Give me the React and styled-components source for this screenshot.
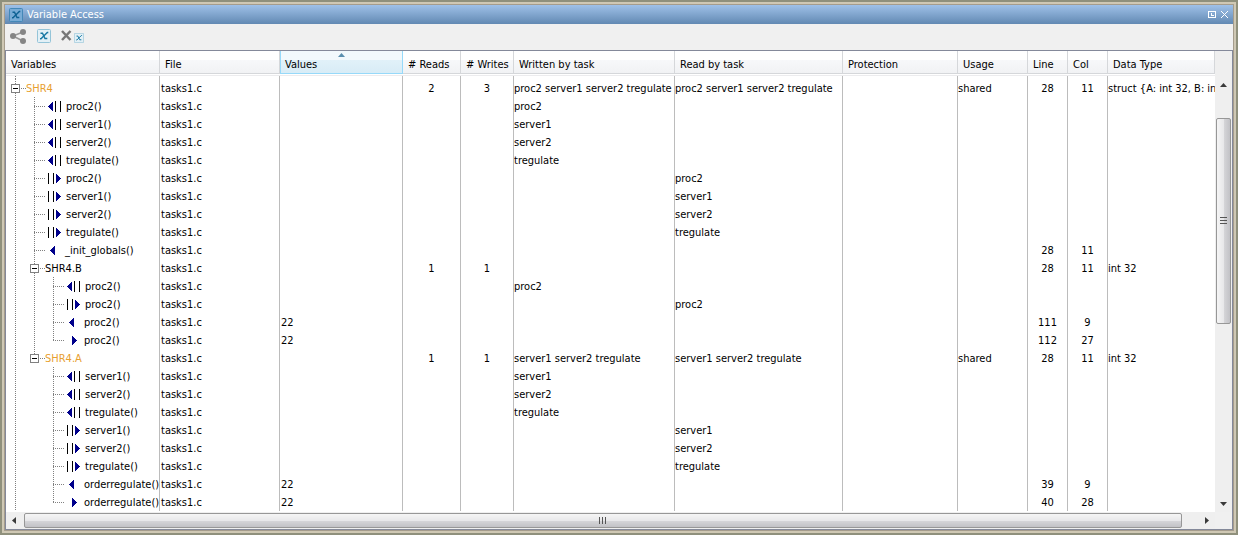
import React from "react";
import styled, { createGlobalStyle } from "styled-components";

const GlobalStyle = createGlobalStyle`
  * { box-sizing: border-box; }
  body {
    margin: 0;
    font-family: "DejaVu Sans Condensed", "DejaVu Sans", sans-serif;
    font-size: 11px;
    line-height: 16px;
    color: #000;
  }
  button { font: inherit; border: 0; padding: 0; background: none; color: inherit; }
`;

const Frame = styled.main`
  min-height: 100vh;
  display: flex;
  flex-direction: column;
  border: 2px solid #8f907c;
  padding: 2px;
  background: #cfc8b4;
`;

const Panel = styled.section`
  flex: 1;
  display: flex;
  flex-direction: column;
  border: 1px solid #a59c8c;
  background: #f0f0f0;
`;

const TitleBar = styled.header`
  display: flex;
  align-items: center;
  height: 19px;
  padding: 0 4px;
  gap: 4px;
  color: #fff;
  background: linear-gradient(#9fc1e8, #6289b3);
`;

const Title = styled.h1`
  flex: 1;
  margin: 0;
  font-size: 11px;
  font-weight: normal;
`;

const TitleButtons = styled.div`
  display: flex;
  gap: 3px;
`;

const IconButton = styled.button`
  display: flex;
  align-items: flex-end;
`;

const Toolbar = styled.div`
  display: flex;
  align-items: center;
  height: 26px;
  padding: 0 5px 2px;
  gap: 10px;
`;

const Grid = styled.div`
  flex: 1;
  display: grid;
  grid-template-columns: minmax(0, 1fr) 17px;
  grid-template-rows: 1fr 17px;
  border: 1px solid #84899a;
`;

const TableArea = styled.div`
  background: #fff;
  overflow: hidden;
`;

const Table = styled.table`
  width: 100%;
  table-layout: fixed;
  border-spacing: 0;
`;

const ColumnWidth = styled.col`
  width: ${(p) => (p.$width ? `${p.$width}px` : "auto")};
`;

const HeadCell = styled.th`
  height: 25px;
  padding: 0 0 1px;
  text-align: left;
  font-weight: normal;
  white-space: nowrap;
  border-bottom: 1px solid #ececee;
`;

const HeadLabel = styled.div`
  position: relative;
  height: 23px;
  padding: 6px 0 0 ${(p) => (p.$sorted ? 4 : 5)}px;
  border: 0 solid ${(p) => (p.$sorted ? "#96d9f9" : "#d5d7da")};
  border-width: ${(p) => (p.$sorted ? "0 1px 1px" : "0 1px 1px 0")};
  background: ${(p) =>
    p.$sorted
      ? "linear-gradient(#f2f9fc 40%, #e1f1f9 42%, #d8ecf6)"
      : "linear-gradient(#fff 40%, #f7f8fa 42%, #f1f2f4)"};
`;

const SortMark = styled.svg`
  position: absolute;
  top: 2px;
  left: calc(50% - 4px);
`;

const Cell = styled.td`
  height: 18px;
  padding: 2px 0 0;
  text-align: ${(p) => (p.$center ? "center" : "left")};
  white-space: nowrap;
  overflow: hidden;
  border-right: 1px solid #bcbcbc;
  &:nth-child(-n + 3) { padding-left: 1px; }
  &:last-child { border-right: 0; }
  tr:first-child > & { height: 21px; padding-top: 5px; }
`;

const TreeCell = styled.td`
  height: 18px;
  padding: 0;
  white-space: nowrap;
  overflow: hidden;
  border-right: 1px solid #bcbcbc;
`;

const TreeRow = styled.div`
  display: flex;
  height: 18px;
  color: ${(p) => (p.$shared ? "#e8a030" : "#000")};
  svg { flex: none; }
`;

const TreeName = styled.span`
  padding-top: 2px;
`;

const FirstLine = styled.div`
  height: 3px;
  margin-left: 9px;
  border-left: 1px dotted #808080;
`;

const Scroll = styled.div`
  display: flex;
  flex-direction: ${(p) => (p.$vertical ? "column" : "row")};
  padding: ${(p) => (p.$vertical ? "26px 0 0" : "0")};
  background: #efefef;
`;

const Arrow = styled.button`
  flex: 0 0 17px;
  display: flex;
  align-items: center;
  justify-content: center;
`;

const Track = styled.div`
  flex: ${(p) => p.$size} 1 0;
`;

const Thumb = styled.div`
  flex: ${(p) => p.$size} 1 0;
  display: flex;
  align-items: center;
  justify-content: center;
  margin: ${(p) => (p.$vertical ? "0 1px" : "1px 0")};
  border: 1px solid #979797;
  border-radius: 2px;
  background: linear-gradient(
    ${(p) => (p.$vertical ? "to right" : "to bottom")},
    #f5f5f5, #e8e8ea 50%, #d6d6d9 52%, #c2c2c6
  );
`;

function VarIcon({ size = 14, fill = "#e3f0f6", stroke = "#94c4d8", ink = "#1878a4" }) {
  return (
    <svg width={size} height={size} viewBox="0 0 14 14" aria-hidden="true">
      <rect x=".5" y=".5" width="13" height="13" rx="1" fill={fill} stroke={stroke} />
      <path d="M3.500 4.300H5.500L8 9.500H10.300" fill="none" stroke={ink} strokeWidth="1.400" />
      <path d="M11.300 3.500H10.300L4 9.800H3" fill="none" stroke={ink} strokeWidth="1.400" />
    </svg>
  );
}

function Expander({ depth, end }) {
  const x = depth * 19 + 5;
  return (
    <svg width={depth * 19 + 20} height="18" shapeRendering="crispEdges" aria-hidden="true">
      <g stroke="#808080" strokeDasharray="1 1">
        {depth > 0 && <path d="M9.500 0V18" />}
        <path d={`M${x + 4.5} 0V${end ? 6 : 18}M${x + 10} 9.500H${x + 15}`} />
      </g>
      <rect x={x + 0.5} y="5.500" width="8" height="8" fill="#fff" stroke="#808080" />
      <path d={`M${x + 2} 9.500h5`} stroke="#000" />
    </svg>
  );
}

function Branch({ depth, kind, last, nested }) {
  const x = depth * 19 + 9;
  const g = x + 14;
  const tasked = kind === "tw" || kind === "tr";
  return (
    <svg width={g + (tasked ? 18 : 17)} height="18" shapeRendering="crispEdges" aria-hidden="true">
      <g stroke="#808080" strokeDasharray="1 1" fill="none">
        <path d="M9.500 0V18" />
        {nested && <path d="M28.500 0V18" />}
        <path d={`M${x + 0.5} 0V${last ? 9 : 18}`} />
        <path d={`M${x} 9.500h11`} />
      </g>
      {kind === "tw" && <path d={`M${g + 5} 5v9l-5-4.500z`} fill="#00008b" />}
      {kind === "tw" && <path d={`M${g + 7.5} 4v11M${g + 12.5} 4v11`} stroke="#000" />}
      {kind === "tr" && <path d={`M${g + 8} 5v9l5-4.500z`} fill="#00008b" />}
      {kind === "tr" && <path d={`M${g + 0.5} 4v11M${g + 5.5} 4v11`} stroke="#000" />}
      {kind === "w" && <path d={`M${g + 7} 5v9l-5-4.500z`} fill="#00008b" />}
      {kind === "r" && <path d={`M${g + 5} 5v9l5-4.500z`} fill="#00008b" />}
    </svg>
  );
}

const columns = [
  { label: "Variables", width: 154 },
  { label: "File", width: 120 },
  { label: "Values", width: 123, sorted: true },
  { label: "# Reads", width: 58 },
  { label: "# Writes", width: 53 },
  { label: "Written by task", width: 161 },
  { label: "Read by task", width: 168 },
  { label: "Protection", width: 115 },
  { label: "Usage", width: 70 },
  { label: "Line", width: 40 },
  { label: "Col", width: 40 },
  { label: "Data Type" },
];

const rows = [
  { depth: 0, name: "SHR4", shared: true, reads: 2, writes: 3, written: "proc2 server1 server2 tregulate", read: "proc2 server1 server2 tregulate", usage: "shared", line: 28, col: 11, type: "struct {A: int 32, B: in" },
  { depth: 1, kind: "tw", name: "proc2()", written: "proc2" },
  { depth: 1, kind: "tw", name: "server1()", written: "server1" },
  { depth: 1, kind: "tw", name: "server2()", written: "server2" },
  { depth: 1, kind: "tw", name: "tregulate()", written: "tregulate" },
  { depth: 1, kind: "tr", name: "proc2()", read: "proc2" },
  { depth: 1, kind: "tr", name: "server1()", read: "server1" },
  { depth: 1, kind: "tr", name: "server2()", read: "server2" },
  { depth: 1, kind: "tr", name: "tregulate()", read: "tregulate" },
  { depth: 1, kind: "w", name: "_init_globals()", line: 28, col: 11 },
  { depth: 1, name: "SHR4.B", reads: 1, writes: 1, line: 28, col: 11, type: "int 32" },
  { depth: 2, kind: "tw", nested: true, name: "proc2()", written: "proc2" },
  { depth: 2, kind: "tr", nested: true, name: "proc2()", read: "proc2" },
  { depth: 2, kind: "w", nested: true, name: "proc2()", values: 22, line: 111, col: 9 },
  { depth: 2, kind: "r", nested: true, last: true, name: "proc2()", values: 22, line: 112, col: 27 },
  { depth: 1, end: true, name: "SHR4.A", shared: true, reads: 1, writes: 1, written: "server1 server2 tregulate", read: "server1 server2 tregulate", usage: "shared", line: 28, col: 11, type: "int 32" },
  { depth: 2, kind: "tw", name: "server1()", written: "server1" },
  { depth: 2, kind: "tw", name: "server2()", written: "server2" },
  { depth: 2, kind: "tw", name: "tregulate()", written: "tregulate" },
  { depth: 2, kind: "tr", name: "server1()", read: "server1" },
  { depth: 2, kind: "tr", name: "server2()", read: "server2" },
  { depth: 2, kind: "tr", name: "tregulate()", read: "tregulate" },
  { depth: 2, kind: "w", name: "orderregulate()", values: 22, line: 39, col: 9 },
  { depth: 2, kind: "r", last: true, name: "orderregulate()", values: 22, line: 40, col: 28 },
];

function Triangle({ d }) {
  return (
    <svg width="7" height="7" aria-hidden="true">
      <path d={d} fill="#3a3a3a" />
    </svg>
  );
}

export default function App() {
  return (
    <Frame>
      <GlobalStyle />
      <Panel>
        <TitleBar>
          <VarIcon fill="#78acd6" stroke="#4488b8" ink="#0f6294" />
          <Title>Variable Access</Title>
          <TitleButtons>
            <IconButton aria-label="Float">
              <svg width="9" height="9" shapeRendering="crispEdges">
                <path d="M.5 1.500h7v6h-7zM3.500 3v2.500H6" fill="none" stroke="#fff" />
              </svg>
            </IconButton>
            <IconButton aria-label="Close">
              <svg width="9" height="9">
                <path d="M1 1l7 7M8 1l-7 7" stroke="#fff" />
              </svg>
            </IconButton>
          </TitleButtons>
        </TitleBar>
        <Toolbar>
          <IconButton aria-label="Show graph">
            <svg width="17" height="16">
              <path d="M3 8l10-4M3 8l10 5" stroke="#999" strokeWidth="1.500" />
              <g fill="#858585">
                <circle cx="3" cy="8" r="3" />
                <circle cx="13" cy="4" r="3" />
                <circle cx="13" cy="13" r="3" />
              </g>
            </svg>
          </IconButton>
          <IconButton aria-label="Show variables"><VarIcon /></IconButton>
          <IconButton aria-label="Remove variables">
            <svg width="13" height="13"><path d="M1 1l8.500 9M9.500 1l-8.500 9" stroke="#777" strokeWidth="2.500" /></svg>
            <VarIcon size={10} />
          </IconButton>
        </Toolbar>
        <Grid>
          <TableArea>
            <Table>
              <colgroup>
                {columns.map((c) => <ColumnWidth key={c.label} $width={c.width} />)}
              </colgroup>
              <thead>
                <tr>
                  {columns.map((c) => (
                    <HeadCell key={c.label} scope="col">
                      <HeadLabel $sorted={c.sorted}>
                        {c.label}
                        {c.sorted && <SortMark width="7" height="4"><path d="M0 4l3.500-4L7 4z" fill="#5a8fae" /></SortMark>}
                      </HeadLabel>
                    </HeadCell>
                  ))}
                </tr>
              </thead>
              <tbody>
                {rows.map((r, i) => (
                  <tr key={i}>
                    <TreeCell>
                      {i === 0 && <FirstLine />}
                      <TreeRow $shared={r.shared}>
                        {r.kind ? <Branch {...r} /> : <Expander depth={r.depth} end={r.end} />}
                        <TreeName>{r.name}</TreeName>
                      </TreeRow>
                    </TreeCell>
                    <Cell>tasks1.c</Cell>
                    <Cell>{r.values}</Cell>
                    <Cell $center>{r.reads}</Cell>
                    <Cell $center>{r.writes}</Cell>
                    <Cell>{r.written}</Cell>
                    <Cell>{r.read}</Cell>
                    <Cell />
                    <Cell>{r.usage}</Cell>
                    <Cell $center>{r.line}</Cell>
                    <Cell $center>{r.col}</Cell>
                    <Cell>{r.type}</Cell>
                  </tr>
                ))}
              </tbody>
            </Table>
          </TableArea>
          <Scroll $vertical>
            <Arrow aria-label="Scroll up"><Triangle d="M0 5l3.500-4L7 5z" /></Arrow>
            <Track $size={24} />
            <Thumb $vertical $size={205}>
              <svg width="7" height="8" shapeRendering="crispEdges"><path d="M0 .5h7M0 3.500h7M0 6.500h7" stroke="#555" /></svg>
            </Thumb>
            <Track $size={172} />
            <Arrow aria-label="Scroll down"><Triangle d="M0 2l3.500 4L7 2z" /></Arrow>
          </Scroll>
          <Scroll>
            <Arrow aria-label="Scroll left"><Triangle d="M5 0l-4 3.500L5 7z" /></Arrow>
            <Track $size={1} />
            <Thumb $size={1158}>
              <svg width="8" height="7" shapeRendering="crispEdges"><path d="M.5 0v7M3.500 0v7M6.500 0v7" stroke="#555" /></svg>
            </Thumb>
            <Track $size={16} />
            <Arrow aria-label="Scroll right"><Triangle d="M2 0l4 3.500L2 7z" /></Arrow>
          </Scroll>
        </Grid>
      </Panel>
    </Frame>
  );
}
